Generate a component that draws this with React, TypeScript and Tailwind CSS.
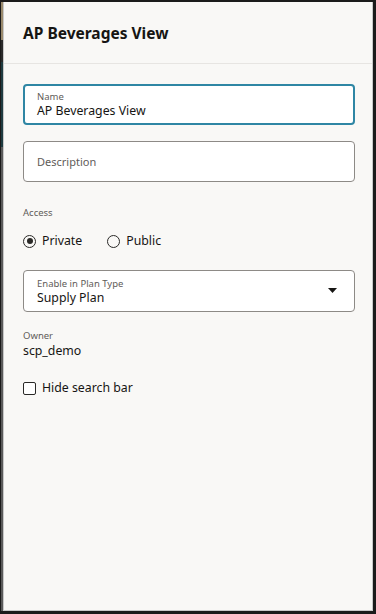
import React from "react";

const font = { fontFamily: '"Noto Sans", "Liberation Sans", sans-serif' };

export default function App() {
  return (
    <div
      className="w-[376px] h-[614px] flex bg-[#1b1b1b] pt-[2px] pr-[3px] pb-[3px] pl-[1px]"
      style={font}
    >
      <div className="w-[2px] flex flex-col">
        <div className="h-[38px] bg-[#9a8a6c]" />
        <div className="h-[22px] bg-[#2a2a2a]" />
        <div className="h-[85px] bg-[#1f3b40]" />
        <div className="flex-1 bg-[#5a5a5a]" />
      </div>
      <div className="flex-1 flex flex-col bg-[#f9f8f6] border-l border-r border-b border-[#c8c8c8]">
        <div className="h-[62px] border-b border-[#e7e5e2] pl-[19px] pt-[20px]">
          <h1 className="text-[15.5px] leading-[22px] font-bold text-[#161513]">
            AP Beverages View
          </h1>
        </div>
        <div className="flex flex-col pl-[19px] pr-[17px] pt-[20px]">
          <div className="h-[41px] rounded-[4px] border-2 border-[#2f86a4] bg-white pl-[12px] flex flex-col justify-center">
            <div className="text-[9.5px] leading-[12px] text-[#5f5c59]">Name</div>
            <div className="text-[12.3px] leading-[16px] text-[#161513]">AP Beverages View</div>
          </div>
          <div className="mt-[16px] h-[41px] rounded-[4px] border border-[#8d8a86] bg-white pl-[13px] pt-[1px] flex items-center">
            <span className="text-[11px] text-[#5f5c59]">Description</span>
          </div>
          <div className="mt-[25px] text-[9.5px] leading-[12px] text-[#5f5c59]">Access</div>
          <div className="mt-[14px] flex items-center h-[16px]">
            <div className="flex items-center">
              <div className="w-[13px] h-[13px] rounded-full border-[1.5px] border-[#2a2927] flex items-center justify-center">
                <div className="w-[6px] h-[6px] rounded-full bg-[#2a2927]" />
              </div>
              <span className="ml-[6px] text-[12.3px] text-[#161513]">Private</span>
            </div>
            <div className="ml-[25px] flex items-center">
              <div className="w-[13px] h-[13px] rounded-full border-[1.5px] border-[#2a2927]" />
              <span className="ml-[6px] text-[12.3px] text-[#161513]">Public</span>
            </div>
          </div>
          <div className="mt-[21px] h-[42px] rounded-[4px] border border-[#8d8a86] bg-white pl-[13px] pr-[17px] flex items-center">
            <div className="flex-1 flex flex-col pt-[1px]">
              <div className="text-[9.5px] leading-[12px] text-[#5f5c59]">Enable in Plan Type</div>
              <div className="text-[12.3px] leading-[16px] text-[#161513]">Supply Plan</div>
            </div>
            <svg width="9" height="5" viewBox="0 0 9 5" className="mb-[2px]">
              <path d="M0 0 L9 0 L4.5 5 Z" fill="#161513" />
            </svg>
          </div>
          <div className="mt-[18px] text-[9.5px] leading-[12px] text-[#5f5c59]">Owner</div>
          <div className="mt-[1px] text-[12.3px] leading-[16px] text-[#161513]">scp_demo</div>
          <div className="mt-[21px] flex items-center h-[16px]">
            <div className="w-[13px] h-[13px] rounded-[2px] border-[1.5px] border-[#2a2927] bg-white" />
            <span className="ml-[6px] text-[12.3px] text-[#161513]">Hide search bar</span>
          </div>
        </div>
      </div>
    </div>
  );
}
